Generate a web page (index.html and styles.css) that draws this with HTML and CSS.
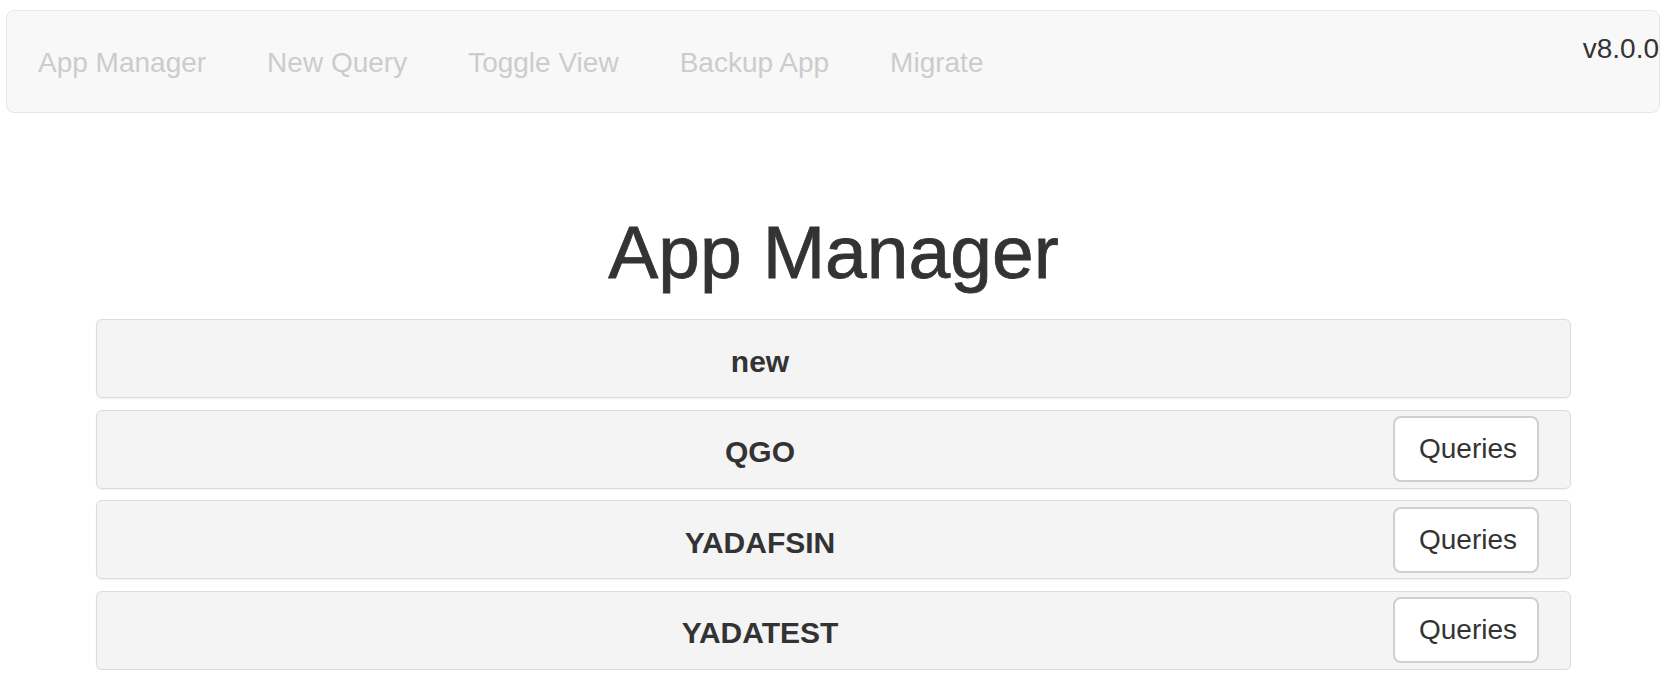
FILE: index.html
```html
<!DOCTYPE html>
<html lang="en">
<head>
<meta charset="utf-8">
<title>App Manager</title>
<link rel="stylesheet" href="styles.css">
</head>
<body>
<nav class="navbar">
  <ul class="nav">
    <li><a href="#">App Manager</a></li>
    <li><a href="#">New Query</a></li>
    <li><a href="#">Toggle View</a></li>
    <li><a href="#">Backup App</a></li>
    <li><a href="#">Migrate</a></li>
  </ul>
  <span class="version">v8.0.0</span>
</nav>
<main class="content">
  <h1 class="title">App Manager</h1>
  <div class="apps">
    <div class="app">
      <h4 class="app-name">new</h4>
    </div>
    <div class="app">
      <h4 class="app-name">QGO</h4>
      <button class="btn" type="button">Queries</button>
    </div>
    <div class="app">
      <h4 class="app-name">YADAFSIN</h4>
      <button class="btn" type="button">Queries</button>
    </div>
    <div class="app">
      <h4 class="app-name">YADATEST</h4>
      <button class="btn" type="button">Queries</button>
    </div>
  </div>
</main>
</body>
</html>
```
FILE: styles.css
```css
* { box-sizing: border-box; }
html, body {
  margin: 0;
  padding: 0;
  background: #fff;
  color: #333;
  font-family: "Liberation Sans", Arial, Helvetica, sans-serif;
}
.navbar {
  margin: 10px 8px 0 6px;
  height: 103px;
  background: #f8f8f8;
  border: 1px solid #e7e7e7;
  border-radius: 8px;
  display: flex;
  align-items: flex-start;
}
.nav {
  list-style: none;
  margin: 0;
  padding: 0;
  display: flex;
  flex: 1;
}
.nav a {
  display: block;
  padding: 32px 30px 0 31px;
  line-height: 40px;
  font-size: 28px;
  color: #cccccc;
  text-decoration: none;
}
.version {
  margin-top: 24px;
  font-size: 28px;
  line-height: 28px;
  color: #333;
}
.content {
  padding: 0 97px 0 96px;
}
.title {
  margin: 100px 0 27px;
  text-align: center;
  font-size: 75px;
  font-weight: normal;
  line-height: 79px;
  color: #333;
  -webkit-text-stroke: 0.8px #333;
}
.apps {
  display: flex;
  flex-direction: column;
  gap: 11.5px;
}
.app {
  height: 79px;
  display: grid;
  grid-template-columns: 1fr 146px;
  align-items: center;
  padding-right: 31px;
  background: #f4f4f4;
  border: 1px solid #dcdcdc;
  border-radius: 6px;
  box-shadow: 0 1px 2px rgba(0, 0, 0, 0.06);
}
.app-name {
  margin: 0;
  padding: 6px 0 0 30px;
  text-align: center;
  font-size: 30px;
  font-weight: bold;
  color: #333;
}
.btn {
  width: 146px;
  height: 66px;
  padding: 0 24px;
  font-family: inherit;
  font-size: 28px;
  color: #333;
  background: #fff;
  border: 2px solid #cfcfcf;
  border-radius: 8px;
}
```
